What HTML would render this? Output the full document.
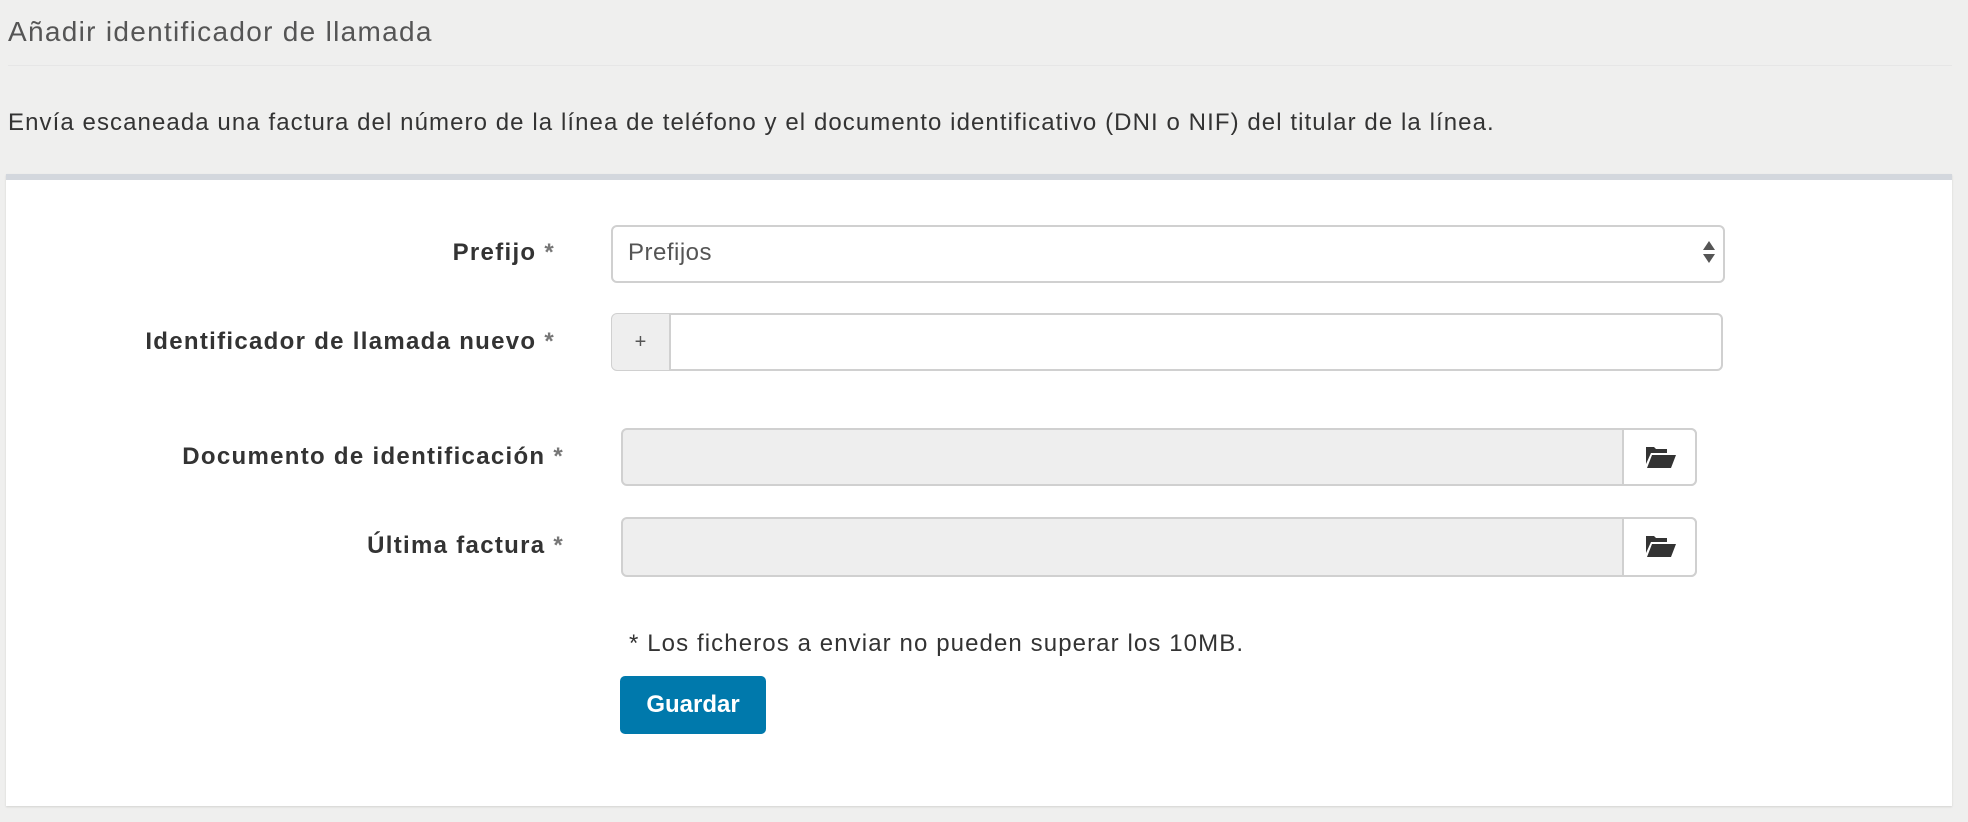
<!DOCTYPE html>
<html><head><meta charset="utf-8"><style>
body{margin:0;width:1968px;height:822px;background:#efefee;font-family:"Liberation Sans",sans-serif;color:#333;position:relative;overflow:hidden}
.a{position:absolute;white-space:nowrap}
.t{left:8px;top:16px;font-size:28px;letter-spacing:1.3px;color:#555}
.hr{left:8px;top:65px;width:1944px;height:1px;background:#e6e6e6}
.d{left:8px;top:109px;font-size:24px;letter-spacing:1.08px;color:#333}
.panel{left:6px;top:174px;width:1946px;height:632px;background:#fff;border-top:6px solid #d3d7dd;box-sizing:border-box;box-shadow:0 1px 2px rgba(0,0,0,.12)}
.lbl{font-size:24px;font-weight:bold;letter-spacing:1.3px;color:#333;text-align:right}
.lbl span{color:#777}
.box{border:2px solid #d0d0d0;border-radius:6px;box-sizing:border-box;background:#fff}
</style></head><body>
<div class="a t">Añadir identificador de llamada</div>
<div class="a hr"></div>
<div class="a d">Envía escaneada una factura del número de la línea de teléfono y el documento identificativo (DNI o NIF) del titular de la línea.</div>
<div class="a panel"></div>

<div class="a lbl" style="right:1413px;top:239px">Prefijo <span>*</span></div>
<div class="a box" style="left:611px;top:225px;width:1114px;height:58px"></div>
<div class="a" style="left:628px;top:239px;font-size:24px;letter-spacing:0.5px;color:#555">Prefijos</div>
<svg class="a" style="left:1702px;top:240px" width="14" height="24"><path d="M7 1L13 10H1Z M7 23L13 14H1Z" fill="#555"/></svg>

<div class="a lbl" style="right:1413px;top:328px">Identificador de llamada nuevo <span>*</span></div>
<div class="a box" style="left:611px;top:313px;width:1112px;height:58px"></div>
<div class="a" style="left:612px;top:314px;width:57px;height:56px;background:#eee;border-right:2px solid #d0d0d0;border-radius:5px 0 0 5px;text-align:center;line-height:56px;font-size:20px;color:#555">+</div>

<div class="a lbl" style="right:1404px;top:443px">Documento de identificación <span>*</span></div>
<div class="a box" style="left:621px;top:428px;width:1076px;height:58px;background:#eee"></div>
<div class="a box" style="left:1622px;top:428px;width:75px;height:58px;border-left:2px solid #d0d0d0;border-radius:0 6px 6px 0"></div>
<svg class="a" style="left:1645px;top:446px" width="32" height="23" viewBox="0 0 32 23"><path d="M1 1h8l2 2h11v4H6L1 18Z M7 9h24l-5 13H2Z" fill="#333"/></svg>

<div class="a lbl" style="right:1404px;top:532px">Última factura <span>*</span></div>
<div class="a box" style="left:621px;top:517px;width:1076px;height:60px;background:#eee"></div>
<div class="a box" style="left:1622px;top:517px;width:75px;height:60px;border-left:2px solid #d0d0d0;border-radius:0 6px 6px 0"></div>
<svg class="a" style="left:1645px;top:535px" width="32" height="23" viewBox="0 0 32 23"><path d="M1 1h8l2 2h11v4H6L1 18Z M7 9h24l-5 13H2Z" fill="#333"/></svg>

<div class="a" style="left:629px;top:630px;font-size:24px;letter-spacing:1.1px;color:#333">* Los ficheros a enviar no pueden superar los 10MB.</div>
<div class="a" style="left:620px;top:676px;width:146px;height:58px;background:#0079ac;border-radius:5px;color:#fff;font-size:24px;font-weight:bold;text-align:center;line-height:58px">Guardar</div>
</body></html>
